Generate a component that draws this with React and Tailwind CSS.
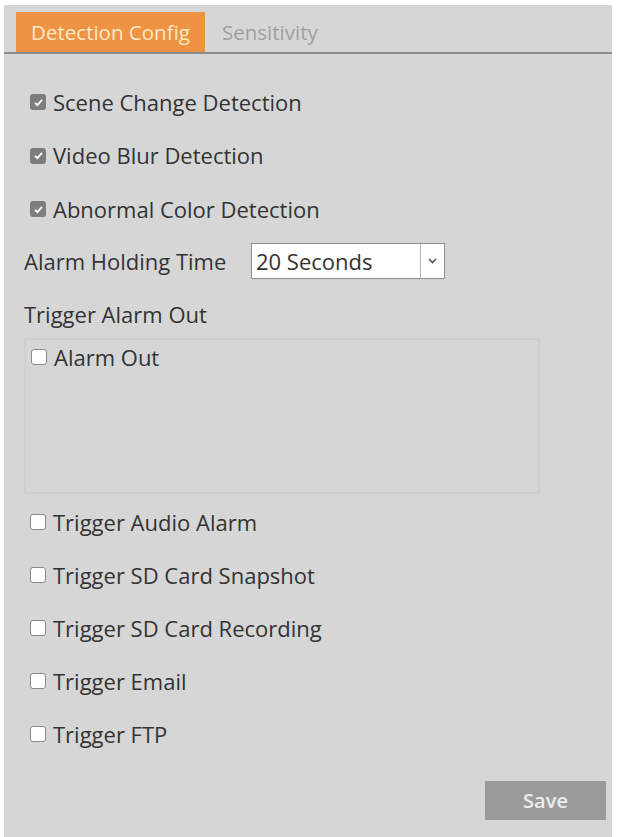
const font = { fontFamily: '"Open Sans", "Noto Sans", sans-serif' };

const Check = ({ checked, label }) => (
  <label className="flex h-[30px] items-center text-[22px] text-[#333]">
    {checked ? (
      <span className="mr-[7px] flex h-[16px] w-[16px] items-center justify-center rounded-[3px] bg-[#7d7d7d]">
        <svg width="11" height="11" viewBox="0 0 11 11">
          <path d="M2 5.8 L4.4 8.2 L9 2.8" fill="none" stroke="#fff" strokeWidth="1.9" />
        </svg>
      </span>
    ) : (
      <span className="mr-[7px] h-[16px] w-[16px] rounded-[3px] border border-[#8a8a8a] bg-white" />
    )}
    {label}
  </label>
);

export default function App() {
  return (
    <div className="h-[837px] w-[618px] overflow-hidden bg-white pl-[4px] pr-[6px] pt-[5px]" style={font}>
      <div className="h-[840px] bg-[#d6d6d6]">
        <div className="flex h-[49px] items-end border-b-2 border-[#8c8c8c] pl-[12px]">
          <div className="flex h-[40px] w-[189px] items-center justify-center bg-[#ee9343] text-[20.5px] text-[#fde8c8]">
            Detection Config
          </div>
          <div className="flex h-[40px] items-center pl-[17px] text-[20.5px] text-[#a0a0a0]">Sensitivity</div>
        </div>

        <div className="pl-[26px] pt-[33px]">
          <div className="flex flex-col gap-[23.5px]">
            <Check checked label="Scene Change Detection" />
            <Check checked label="Video Blur Detection" />
            <Check checked label="Abnormal Color Detection" />
          </div>
        </div>

        <div className="mt-[19px] flex items-center pl-[20px] text-[22px] text-[#333]">
          <span className="w-[227px]">Alarm Holding Time</span>
          <div className="flex h-[36px] w-[194px] border border-[#8f8f8f] bg-white">
            <span className="flex flex-1 items-center pl-[4px]">20 Seconds</span>
            <span className="flex w-[24px] items-center justify-center border-l border-[#b5b5b5]">
              <svg width="9" height="6" viewBox="0 0 9 6">
                <path d="M1 1 L4.5 4.5 L8 1" fill="none" stroke="#555" strokeWidth="1.6" />
              </svg>
            </span>
          </div>
        </div>

        <div className="mt-[19px] pl-[20px] text-[22px] text-[#333]">Trigger Alarm Out</div>

        <div className="ml-[20px] mt-[7px] h-[156px] w-[516px] border-2 border-[#d0d0d0] pl-[5px] pt-[2px]">
          <Check label="Alarm Out" />
        </div>

        <div className="flex flex-col gap-[23px] pl-[26px] pt-[13px]">
          <Check label="Trigger Audio Alarm" />
          <Check label="Trigger SD Card Snapshot" />
          <Check label="Trigger SD Card Recording" />
          <Check label="Trigger Email" />
          <Check label="Trigger FTP" />
        </div>

        <div className="flex justify-end pr-[6px] pt-[32px]">
          <button className="h-[39px] w-[121px] bg-[#9b9b9b] text-[20px] font-semibold text-[#ececec]">Save</button>
        </div>
      </div>
    </div>
  );
}
